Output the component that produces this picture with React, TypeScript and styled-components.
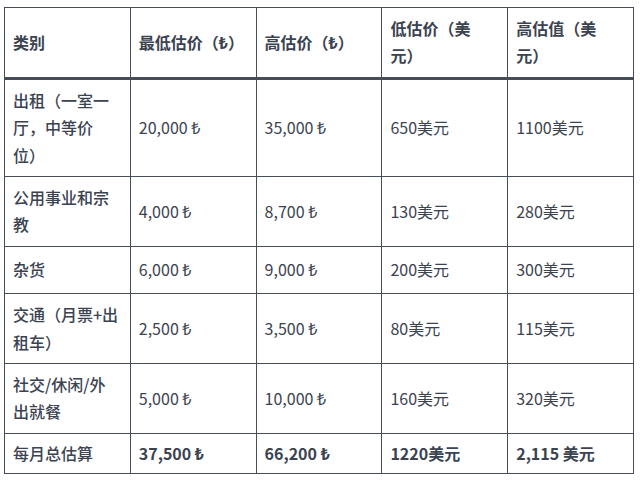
import React from "react";
import styled, { createGlobalStyle } from "styled-components";

const Global = createGlobalStyle`
  html, body { margin: 0; padding: 0; background: #ffffff; }
  body { font-family: "Noto Sans CJK SC", "Noto Sans", sans-serif; }
`;

const Page = styled.div`
  padding: 7px 0 0 4px;
`;

const Table = styled.table`
  border-collapse: collapse;
  table-layout: fixed;
  width: 630px;
  color: #3b4351;
  font-size: 16px;
  line-height: 27.4px;
  text-spacing-trim: space-all;
`;

const Th = styled.th`
  width: 20%;
  text-align: left;
  vertical-align: middle;
  font-weight: 700;
  padding: 7px 9px 7px 8px;
  border: 1px solid #464d59;
  border-bottom: 3px solid #464d59;
  text-spacing-trim: space-all;
`;

const Td = styled.td<{ $weight: number; $pad: number }>`
  text-align: left;
  vertical-align: middle;
  font-weight: ${(p) => p.$weight};
  padding: ${(p) => p.$pad}px 9px ${(p) => p.$pad}px 8px;
  border: 1px solid #464d59;
  text-spacing-trim: space-all;
`;

type RowData = { cells: string[]; bold?: boolean; pad: number };

const head = ["类别", "最低估价（₺）", "高估价（₺）", "低估价（美元）", "高估值（美元）"];

const rows: RowData[] = [
  { cells: ["出租（一室一厅，中等价位）", "20,000 ₺", "35,000 ₺", "650美元", "1100美元"], pad: 7 },
  { cells: ["公用事业和宗教", "4,000 ₺", "8,700 ₺", "130美元", "280美元"], pad: 7 },
  { cells: ["杂货", "6,000 ₺", "9,000 ₺", "200美元", "300美元"], pad: 9.5 },
  { cells: ["交通（月票+出租车）", "2,500 ₺", "3,500 ₺", "80美元", "115美元"], pad: 7 },
  { cells: ["社交/休闲/外出就餐", "5,000 ₺", "10,000 ₺", "160美元", "320美元"], pad: 7 },
  { cells: ["每月总估算", "37,500 ₺", "66,200 ₺", "1220美元", "2,115 美元"], bold: true, pad: 6 },
];

export default function App() {
  return (
    <>
      <Global />
      <Page>
        <Table>
          <thead>
            <tr>
              {head.map((h) => (
                <Th key={h}>{h}</Th>
              ))}
            </tr>
          </thead>
          <tbody>
            {rows.map((r, i) => (
              <tr key={i}>
                {r.cells.map((c, j) => (
                  <Td key={j} $weight={j === 0 ? 500 : r.bold ? 700 : 400} $pad={r.pad}>
                    {c}
                  </Td>
                ))}
              </tr>
            ))}
          </tbody>
        </Table>
      </Page>
    </>
  );
}
